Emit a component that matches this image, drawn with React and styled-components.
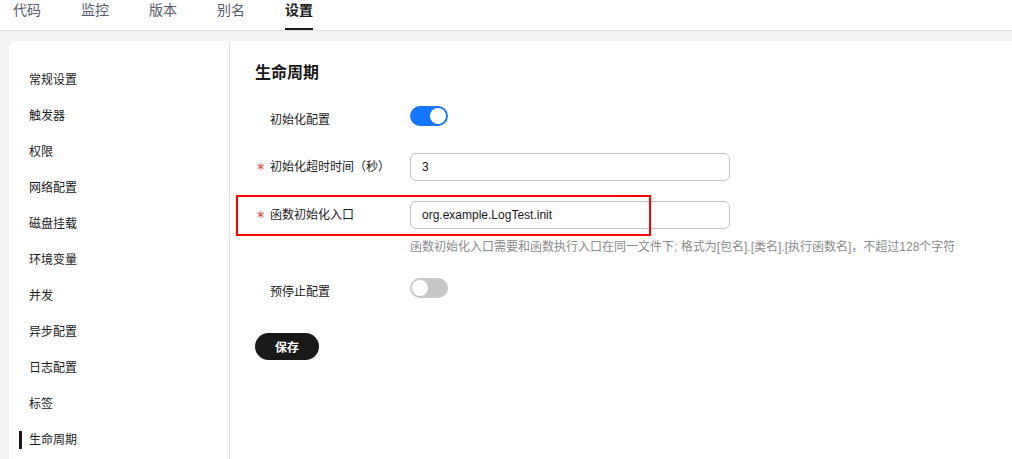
import React, { useState } from "react";
import styled, { createGlobalStyle } from "styled-components";

const Global = createGlobalStyle`
  html, body { margin: 0; padding: 0; background: #fff; }
  body {
    font-family: "Liberation Sans", "Noto Sans CJK SC", Arial, sans-serif;
    color: #191919;
    overflow: hidden;
  }
  * { box-sizing: border-box; }
`;

const Page = styled.div`
  display: flex;
  flex-direction: column;
  height: 100vh;
`;

const TabBar = styled.div`
  display: flex;
  gap: 40px;
  padding-left: 13px;
  border-bottom: 1px solid #dfdfdf;
  height: 31px;
`;

const Tab = styled.div`
  font-size: 14px;
  line-height: 20px;
  height: 30px;
  padding-bottom: 8px;
  color: ${(p) => (p.$active ? "#191919" : "#575d6c")};
  font-weight: ${(p) => (p.$active ? 600 : 400)};
  border-bottom: 2px solid ${(p) => (p.$active ? "#191919" : "transparent")};
`;

const Body = styled.div`
  flex: 1;
  background: #f3f3f3;
  padding: 10px 0 0 9px;
  display: flex;
  min-height: 0;
`;

const Card = styled.div`
  flex: 1;
  background: #fff;
  border-top-left-radius: 8px;
  display: flex;
`;

const Sidebar = styled.nav`
  width: 221px;
  border-right: 1px solid #dfdfdf;
  padding-top: 21px;
  display: flex;
  flex-direction: column;
`;

const NavItem = styled.div`
  position: relative;
  height: 36px;
  line-height: 36px;
  padding-left: 20px;
  font-size: 12px;
  color: #191919;
  &::before {
    content: "";
    display: ${(p) => (p.$active ? "block" : "none")};
    position: absolute;
    left: 10px;
    top: 9px;
    width: 3px;
    height: 18px;
    background: #191919;
  }
`;

const Content = styled.section`
  flex: 1;
  padding: 20px 0 0 25px;
  display: flex;
  flex-direction: column;
`;

const Title = styled.h2`
  margin: 0 0 20px;
  font-size: 16px;
  line-height: 24px;
  font-weight: 700;
  color: #191919;
`;

const Form = styled.div`
  display: flex;
  flex-direction: column;
  gap: 20px;
`;

const Row = styled.div`
  position: relative;
  display: flex;
  align-items: flex-start;
`;

const Label = styled.div`
  width: 155px;
  display: flex;
  align-items: center;
  font-size: 12px;
  line-height: 28px;
  height: 28px;
  padding-top: ${(p) => (p.$low ? "1px" : "0")};
  color: #191919;
`;

const Star = styled.span`
  width: 15px;
  padding-left: 2px;
  color: #e54545;
  font-family: "DejaVu Sans", sans-serif;
  font-size: 15px;
  position: relative;
  top: 3px;
`;

const Field = styled.div`
  display: flex;
  flex-direction: column;
`;

const Input = styled.input`
  width: 320px;
  height: 28px;
  border: 1px solid #c2c2c2;
  border-radius: 6px;
  padding: 0 11px;
  font-family: inherit;
  font-size: 12px;
  color: #191919;
  outline: none;
  background: #fff;
`;

const Hint = styled.div`
  margin-top: 8px;
  font-size: 12px;
  line-height: 20px;
  color: #8a8a8a;
  white-space: nowrap;
`;

const SwitchTrack = styled.button`
  position: relative;
  width: 38px;
  height: 20px;
  margin-top: 1px;
  border: none;
  padding: 0;
  border-radius: 10px;
  cursor: pointer;
  background: ${(p) => (p.$on ? "#1476ff" : "#c7c7c7")};
  &::after {
    content: "";
    position: absolute;
    top: 2px;
    left: ${(p) => (p.$on ? "20px" : "2px")};
    width: 16px;
    height: 16px;
    border-radius: 50%;
    background: #fff;
  }
`;

const Highlight = styled.div`
  position: absolute;
  left: -19px;
  top: -6px;
  width: 415px;
  height: 41px;
  border: 2px solid #ff0000;
  pointer-events: none;
`;

const SaveButton = styled.button`
  align-self: flex-start;
  margin-top: 28px;
  height: 27px;
  padding: 0 20px;
  border: none;
  border-radius: 14px;
  background: #191919;
  color: #fff;
  font-family: inherit;
  font-size: 12px;
  font-weight: 700;
  cursor: pointer;
`;

const tabs = ["代码", "监控", "版本", "别名", "设置"];
const navs = [
  "常规设置",
  "触发器",
  "权限",
  "网络配置",
  "磁盘挂载",
  "环境变量",
  "并发",
  "异步配置",
  "日志配置",
  "标签",
  "生命周期",
];

function Switch({ initial }) {
  const [on, setOn] = useState(initial);
  return <SwitchTrack $on={on} onClick={() => setOn(!on)} aria-pressed={on} />;
}

export default function App() {
  return (
    <Page>
      <Global />
      <TabBar>
        {tabs.map((t) => (
          <Tab key={t} $active={t === "设置"}>
            {t}
          </Tab>
        ))}
      </TabBar>
      <Body>
        <Card>
          <Sidebar>
            {navs.map((n) => (
              <NavItem key={n} $active={n === "生命周期"}>
                {n}
              </NavItem>
            ))}
          </Sidebar>
          <Content>
            <Title>生命周期</Title>
            <Form>
              <Row>
                <Label $low>
                  <Star />
                  初始化配置
                </Label>
                <Switch initial={true} />
              </Row>
              <Row>
                <Label>
                  <Star>*</Star>
                  初始化超时时间（秒）
                </Label>
                <Input defaultValue="3" />
              </Row>
              <Row>
                <Highlight />
                <Label>
                  <Star>*</Star>
                  函数初始化入口
                </Label>
                <Field>
                  <Input defaultValue="org.example.LogTest.init" />
                  <Hint>
                    函数初始化入口需要和函数执行入口在同一文件下; 格式为[包名].[类名].[执行函数名]，不超过128个字符
                  </Hint>
                </Field>
              </Row>
              <Row>
                <Label $low>
                  <Star />
                  预停止配置
                </Label>
                <Switch initial={false} />
              </Row>
            </Form>
            <SaveButton>保存</SaveButton>
          </Content>
        </Card>
      </Body>
    </Page>
  );
}
